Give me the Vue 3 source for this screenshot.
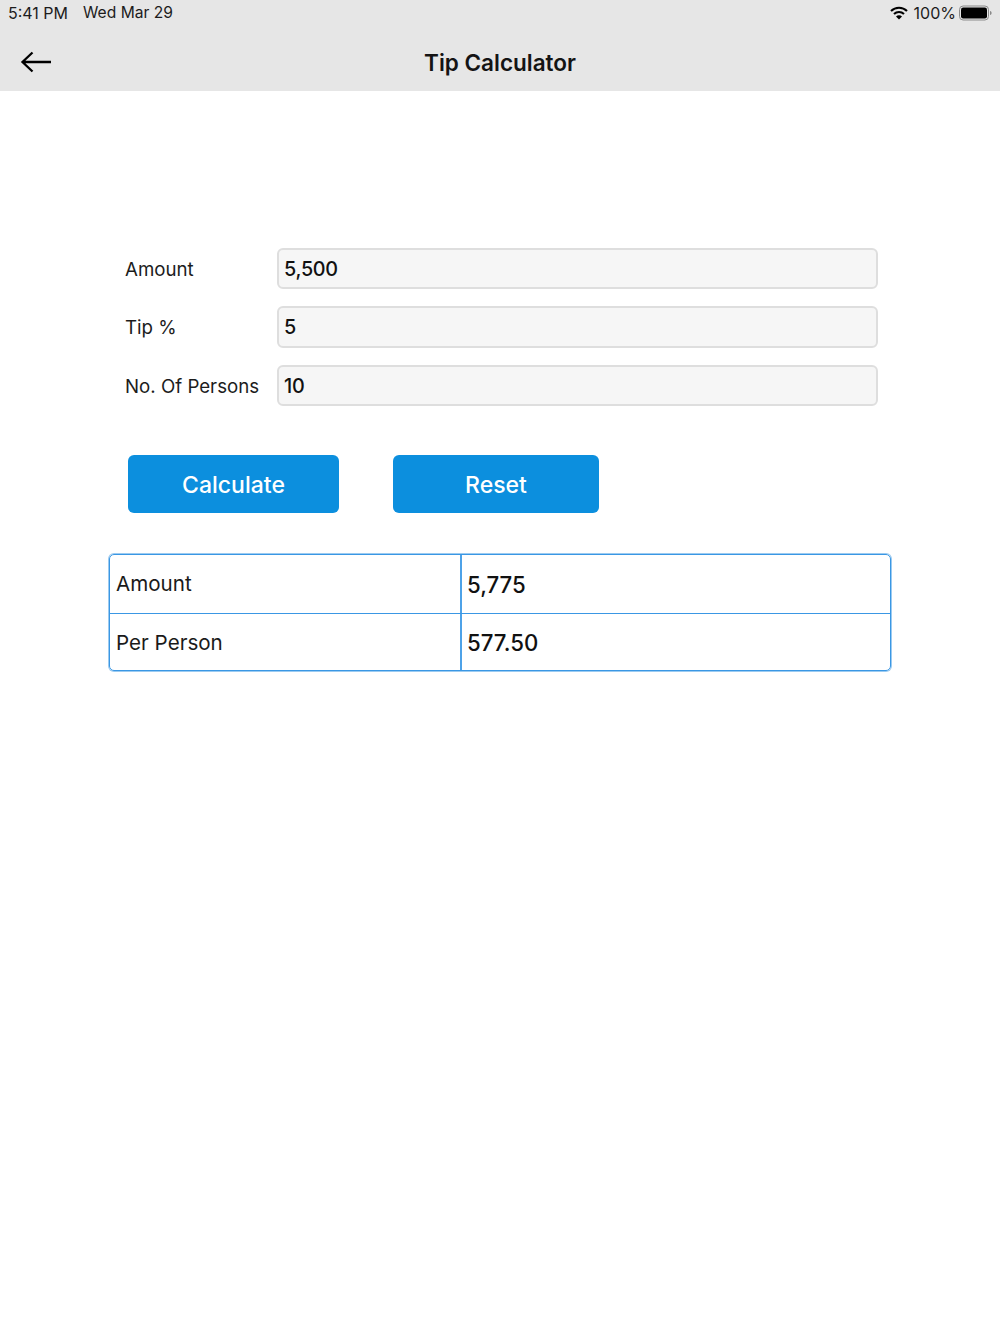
<script setup>
const fields = [
  { label: 'Amount', value: '5,500' },
  { label: 'Tip %', value: '5' },
  { label: 'No. Of Persons', value: '10' },
]
const results = [
  { label: 'Amount', value: '5,775' },
  { label: 'Per Person', value: '577.50' },
]
</script>

<template>
  <div class="page">
    <header class="header">
      <div class="status">
        <span class="time">5:41 PM</span>
        <span class="date">Wed Mar 29</span>
        <span class="status-right">
          <svg class="wifi" width="18" height="14" viewBox="0 0 18 14">
            <path d="M1 5 A11.5 11.5 0 0 1 17 5" fill="none" stroke="#000" stroke-width="2.1" />
            <path d="M4 8 A7.3 7.3 0 0 1 14 8" fill="none" stroke="#000" stroke-width="2.1" />
            <path d="M9 13.6 L6 10.4 A4.2 4.2 0 0 1 12 10.4 Z" fill="#000" />
          </svg>
          <span class="pct">100%</span>
          <svg class="battery" width="34" height="16" viewBox="0 0 34 16">
            <rect x="0.5" y="1" width="29" height="14" rx="3.6" fill="none" stroke="#8a8a8a" stroke-width="1" />
            <rect x="2" y="2.5" width="26" height="11" rx="2.2" fill="#000" />
            <path d="M31 6 C32.2 6.3 32.6 7 32.6 8 C32.6 9 32.2 9.7 31 10 Z" fill="#8a8a8a" />
          </svg>
        </span>
      </div>
      <div class="nav">
        <svg class="back" width="32" height="22" viewBox="0 0 32 22">
          <path d="M31 11 H2.5 M12.5 1.5 L2.5 11 L12.5 20.5" fill="none" stroke="#000" stroke-width="2.3" />
        </svg>
        <h1 class="title">Tip Calculator</h1>
      </div>
    </header>

    <main class="content">
      <div class="form">
        <div v-for="f in fields" :key="f.label" class="field">
          <label class="label">{{ f.label }}</label>
          <div class="input">{{ f.value }}</div>
        </div>
      </div>

      <div class="actions">
        <button class="btn btn-calc">Calculate</button>
        <button class="btn btn-reset">Reset</button>
      </div>

      <div class="table">
        <div v-for="r in results" :key="r.label" class="row">
          <div class="cell cell-label">{{ r.label }}</div>
          <div class="cell cell-value">{{ r.value }}</div>
        </div>
      </div>
    </main>
  </div>
</template>

<style>
html, body { margin: 0; background: #fff; }
</style>

<style scoped>
.page {
  width: 1000px;
  height: 1334px;
  background: #fff;
  font-family: Inter, "Liberation Sans", sans-serif;
  color: #111;
  overflow: hidden;
}
.header {
  height: 91px;
  background: #e6e6e6;
  box-sizing: border-box;
}
.status {
  height: 25px;
  display: flex;
  align-items: center;
  padding: 0 8px;
  font-size: 16px;
  color: #1c1c1c;
}
.date { margin-left: 15px; font-size: 15.6px; }
.status-right {
  margin-left: auto;
  display: flex;
  align-items: center;
  margin-right: -1px;
}
.wifi { margin-right: 6px; }
.pct { margin-right: 3px; }
.nav {
  height: 66px;
  display: grid;
  grid-template-columns: 1fr auto 1fr;
  align-items: center;
  padding: 8px 20px 0;
  box-sizing: border-box;
}
.title {
  margin: 0;
  font-size: 22.5px;
  font-weight: 600;
  color: #141414;
}
.content { padding: 156.9px 108px 0; }
.form {
  display: flex;
  flex-direction: column;
  gap: 17px;
  padding-left: 17px;
}
.field {
  display: flex;
  align-items: center;
  height: 41.5px;
}
.label {
  width: 152px;
  font-size: 18.7px;
  color: #1c1c1c;
  padding-top: 1px;
}
.input {
  width: 600.5px;
  height: 41.5px;
  box-sizing: border-box;
  padding: 0 5px;
  display: flex;
  align-items: center;
  background: #f6f6f6;
  border: 2px solid #dedede;
  border-radius: 6px;
  font-size: 19.8px;
  font-weight: 500;
  letter-spacing: -0.3px;
  color: #111;
}
.actions {
  display: flex;
  gap: 54px;
  margin-top: 48.6px;
  padding-left: 20px;
}
.btn {
  height: 58px;
  border: 0;
  border-radius: 6px;
  background: #0c8fde;
  color: #fff;
  font-family: inherit;
  font-size: 23px;
  font-weight: 500;
  padding: 2px 0 0;
}
.btn-calc { width: 211px; }
.btn-reset { width: 206px; }
.table {
  margin-top: 41px;
  width: 782px;
  margin-left: 1px;
  box-sizing: border-box;
  border: 1px solid #3a97e4;
  border-radius: 5px;
  box-shadow: 0 0 0 1px rgba(58, 151, 228, 0.5);
}
.row {
  display: flex;
  height: 58px;
}
.row + .row {
  border-top: 1px solid #3a97e4;
  height: 56px;
}
.cell {
  display: flex;
  align-items: center;
  padding: 0 0 1px 6px;
  font-size: 20.6px;
  box-sizing: border-box;
}
.row + .row .cell { padding-top: 2px; padding-bottom: 0; }
.cell-label { width: 350px; color: #1a1a1a; }
.cell-value {
  flex: 1;
  border-left: 2px solid #4da2e8;
  padding: 2px 0 0 5px;
  font-size: 22.2px;
  font-weight: 500;
  color: #111;
}
</style>
